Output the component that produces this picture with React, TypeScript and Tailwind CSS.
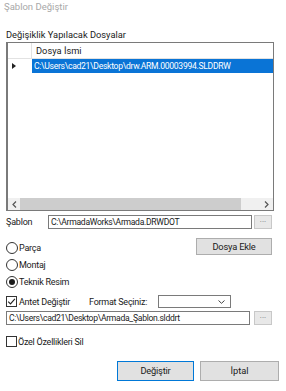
import React from "react";

const font = { fontFamily: 'Roboto, "Noto Sans", sans-serif' };

function Radio({ label, checked }: { label: string; checked?: boolean }) {
  return (
    <div className="flex h-[12px] items-center gap-[1px]">
      <span className="flex h-[12px] w-[12px] items-center justify-center rounded-full border border-[#333333] bg-white">
        {checked && <span className="h-[6px] w-[6px] rounded-full bg-[#1a1a1a]" />}
      </span>
      <span className="text-[9px] leading-[12px] tracking-[-0.25px] text-[#1a1a1a]">{label}</span>
    </div>
  );
}

function Check({ checked }: { checked?: boolean }) {
  return (
    <span className="flex h-[11px] w-[11px] shrink-0 items-center justify-center border border-[#333333] bg-white">
      {checked && (
        <svg width="9" height="9" viewBox="0 0 9 9">
          <path d="M1.2 4.6 L3.5 6.9 L7.9 1.8" fill="none" stroke="#222" strokeWidth="1.1" />
        </svg>
      )}
    </span>
  );
}

function DotsButton() {
  return (
    <div className="flex h-[14px] w-[18px] items-start justify-center border border-[#c8c8c8] bg-[#e8e8e8] text-[8px] leading-[8px] text-[#777]">
      ...
    </div>
  );
}

export default function App() {
  return (
    <div className="h-[391px] w-[286px] overflow-hidden bg-white text-[#1a1a1a]" style={font}>
      <div className="pl-[4px] pt-[1px] text-[9.5px] leading-[12px] text-[#a8a8a8]">Şablon Değiştir</div>

      <div className="mt-[16px] pl-[6px] text-[9.3px] leading-[12px]">Değişiklik Yapılacak Dosyalar</div>

      {/* file grid */}
      <div className="ml-[6px] mt-[1px] flex h-[169px] w-[268px] flex-col border-l-2 border-t border-r border-b border-[#7a7a7a] bg-white">
        <div className="flex h-[16px] border-b border-[#e2e2e2]">
          <div className="w-[24px] border-r border-[#e2e2e2]" />
          <div className="pl-[4px] text-[9.3px] leading-[16px]">Dosya İsmi</div>
        </div>
        <div className="flex h-[14px]">
          <div className="flex w-[24px] items-center pl-[4px]">
            <svg width="4" height="6" viewBox="0 0 4 6">
              <path d="M0 0 L4 3 L0 6 Z" fill="#222" />
            </svg>
          </div>
          <div className="flex-1 bg-[#0a74d6] pl-[2px] text-[8.6px] leading-[14px] tracking-[-0.3px] text-white">
            C:\Users\cad21\Desktop\drw.ARM.00003994.SLDDRW
          </div>
        </div>
        <div className="flex-1" />
        <div className="flex h-[12px] items-center bg-[#f0f0f0]">
          <div className="flex w-[12px] justify-center">
            <svg width="5" height="7" viewBox="0 0 5 7">
              <path d="M4 0.5 L1 3.5 L4 6.5" fill="none" stroke="#555" strokeWidth="1.2" />
            </svg>
          </div>
          <div className="h-[12px] w-[221px] bg-[#cdcdcd]" />
          <div className="flex flex-1 justify-end pr-[4px]">
            <svg width="5" height="7" viewBox="0 0 5 7">
              <path d="M1 0.5 L4 3.5 L1 6.5" fill="none" stroke="#555" strokeWidth="1.2" />
            </svg>
          </div>
        </div>
      </div>

      {/* template row */}
      <div className="mt-[4px] flex h-[14px] items-center pl-[6px]">
        <span className="w-[42px] text-[9px] leading-[14px] tracking-[-0.2px]">Şablon</span>
        <div className="h-[14px] w-[204px] border border-[#7a7a7a] pl-[2px] text-[8.6px] leading-[12px] tracking-[-0.3px]">
          C:\ArmadaWorks\Armada.DRWDOT
        </div>
        <div className="ml-[2px]">
          <DotsButton />
        </div>
      </div>

      {/* radios + add button */}
      <div className="mt-[9px] flex">
        <div className="flex flex-col gap-[5px] pl-[6px] pt-[4px]">
          <Radio label="Parça" />
          <Radio label="Montaj" />
          <Radio label="Teknik Resim" checked />
        </div>
        <div className="ml-auto mr-[14px]">
          <div className="flex h-[17px] w-[76px] items-center justify-center border border-[#adadad] bg-[#e1e1e1] text-[9.3px] tracking-[-0.2px]">
            Dosya Ekle
          </div>
        </div>
      </div>

      {/* header change */}
      <div className="mt-[7px] flex h-[13px] items-center pl-[6px]">
        <Check checked />
        <span className="ml-[2px] w-[70px] text-[9px] leading-[12px] tracking-[-0.25px]">Antet Değiştir</span>
        <span className="w-[69px] text-[9px] leading-[12px] tracking-[-0.25px]">Format Seçiniz:</span>
        <div className="flex h-[13px] w-[73px] items-center justify-end border border-[#7a7a7a] bg-white pr-[5px]">
          <svg width="7" height="4" viewBox="0 0 7 4">
            <path d="M0.5 0.5 L3.5 3.3 L6.5 0.5" fill="none" stroke="#444" strokeWidth="1" />
          </svg>
        </div>
      </div>

      <div className="mt-[3px] flex h-[14px] items-center pl-[6px]">
        <div className="h-[14px] w-[244px] border border-[#7a7a7a] pl-[2px] text-[8.6px] leading-[12px] tracking-[-0.3px]">
          C:\Users\cad21\Desktop\Armada_Şablon.slddrt
        </div>
        <div className="ml-[4px]">
          <DotsButton />
        </div>
      </div>

      <div className="mt-[11px] flex h-[11px] items-center pl-[6px]">
        <Check />
        <span className="ml-[1px] text-[9px] leading-[12px] tracking-[-0.25px]">Özel Özellikleri Sil</span>
      </div>

      {/* action buttons */}
      <div className="mt-[14px] flex gap-[6px] pl-[117px]">
        <div className="flex h-[20px] w-[77px] items-center justify-center border border-[#0078d7] bg-[#e1e1e1] text-[9.3px] tracking-[-0.2px]">
          Değiştir
        </div>
        <div className="flex h-[20px] w-[79px] items-center justify-center border border-[#adadad] bg-[#e1e1e1] text-[9.3px]">
          İptal
        </div>
      </div>
    </div>
  );
}
